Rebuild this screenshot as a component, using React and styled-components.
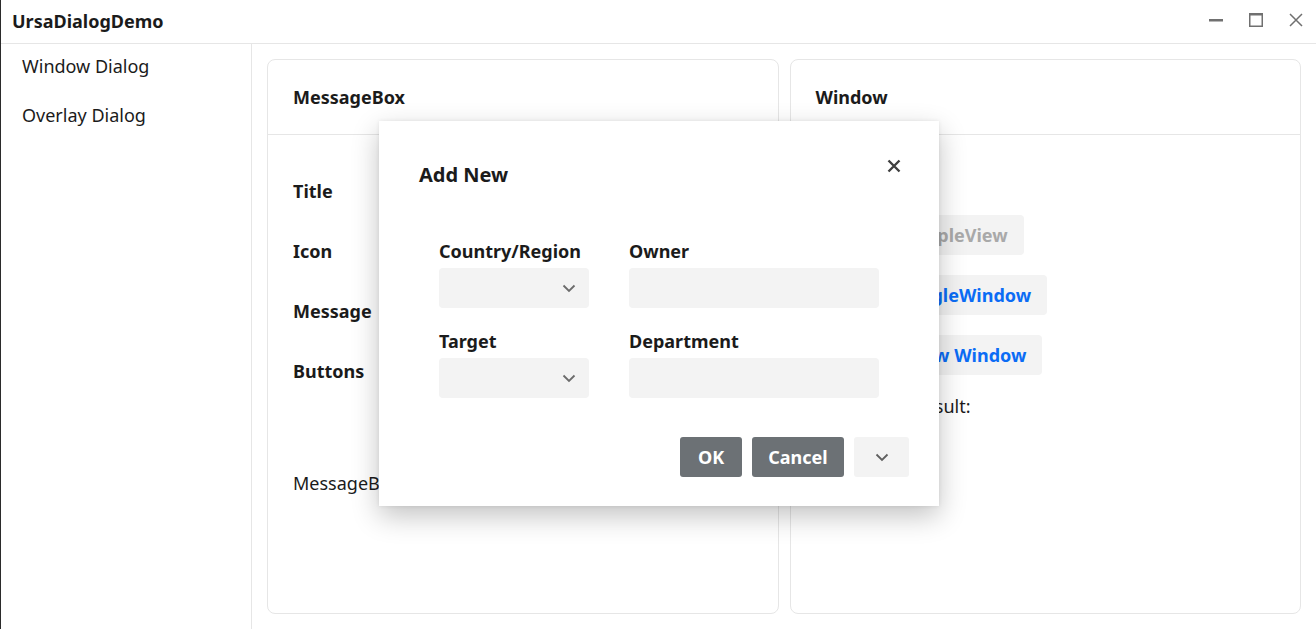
import React from "react";
import styled, { createGlobalStyle } from "styled-components";

const GlobalStyle = createGlobalStyle`
  html, body {
    margin: 0;
    padding: 0;
    height: 100%;
    background: #ffffff;
    font-family: "Noto Sans", "Open Sans", sans-serif;
    color: #1b1b1b;
  }
  #root {
    height: 100%;
  }
  * {
    box-sizing: border-box;
  }
`;

const WindowFrame = styled.div`
  position: relative;
  width: 100vw;
  height: 100vh;
  display: flex;
  flex-direction: column;
  border-left: 1px solid #2b2b2b;
  overflow: hidden;
`;

const TitleBar = styled.div`
  height: 44px;
  flex: none;
  display: flex;
  align-items: center;
  justify-content: space-between;
  padding-left: 11px;
  border-bottom: 1px solid #e6e6e6;
`;

const AppTitle = styled.div`
  font-size: 18px;
  font-weight: 700;
  line-height: 24px;
  margin-top: -2px;
`;

const Controls = styled.div`
  display: flex;
  align-items: center;
  height: 100%;
`;

const ControlButton = styled.div`
  width: 40px;
  height: 100%;
  display: flex;
  align-items: center;
  justify-content: center;
  margin-top: -4px;
  color: #707070;
`;

const Body = styled.div`
  flex: 1;
  display: flex;
  min-height: 0;
`;

const Sidebar = styled.nav`
  width: 251px;
  flex: none;
  border-right: 1px solid #e6e6e6;
  padding-top: 10px;
`;

const NavItem = styled.div`
  height: 49px;
  padding-left: 21px;
  font-size: 18px;
  line-height: 24px;
  color: #1b1b1b;
`;

const Main = styled.main`
  flex: 1;
  display: grid;
  grid-template-columns: 1fr 1fr;
  gap: 11px;
  padding: 15px;
`;

const Panel = styled.section`
  border: 1px solid #e6e6e6;
  border-radius: 8px;
  display: flex;
  flex-direction: column;
  min-width: 0;
`;

const PanelHeader = styled.div`
  height: 75px;
  flex: none;
  display: flex;
  align-items: center;
  padding-left: 25px;
  border-bottom: 1px solid #e6e6e6;
  font-size: 18px;
  font-weight: 700;
`;

const PanelBody = styled.div`
  padding: ${(p) => p.$top}px 25px 0 ${(p) => p.$left}px;
  display: flex;
  flex-direction: column;
  align-items: flex-start;
`;

const FieldLabel = styled.div`
  height: 60px;
  font-size: 18px;
  font-weight: 700;
  line-height: 24px;
`;

const PlainText = styled.div`
  font-size: 18px;
  line-height: 24px;
  margin-top: ${(p) => p.$gap || 0}px;
  white-space: nowrap;
`;

const ActionButton = styled.button`
  height: 40px;
  margin-bottom: 20px;
  padding: 0 16px;
  border: none;
  border-radius: 4px;
  background: #f3f3f3;
  font-family: inherit;
  font-size: 18px;
  font-weight: 700;
  white-space: nowrap;
  color: ${(p) => (p.disabled ? "#a9a9a9" : "#0b6cf5")};
`;

const Overlay = styled.div`
  position: absolute;
  inset: 0;
  display: flex;
  align-items: center;
  justify-content: center;
`;

const Dialog = styled.div`
  width: 560px;
  height: 385px;
  margin-left: 1px;
  margin-top: -2px;
  background: #ffffff;
  box-shadow: 0 10px 26px rgba(0, 0, 0, 0.24), 0 0 4px rgba(0, 0, 0, 0.08);
  display: flex;
  flex-direction: column;
`;

const DialogHeader = styled.div`
  display: flex;
  justify-content: space-between;
  align-items: flex-start;
  padding: 40px 33px 0 40px;
`;

const DialogTitle = styled.div`
  font-size: 20px;
  font-weight: 700;
  line-height: 28px;
`;

const CloseButton = styled.div`
  width: 24px;
  height: 24px;
  margin-top: -7px;
  display: flex;
  align-items: center;
  justify-content: center;
  color: #404040;
`;

const FormGrid = styled.div`
  display: grid;
  grid-template-columns: 150px 250px;
  column-gap: 40px;
  row-gap: 21px;
  padding: 50px 0 0 60px;
`;

const FormField = styled.div`
  display: flex;
  flex-direction: column;
  gap: 4px;
`;

const FormLabel = styled.div`
  font-size: 18px;
  font-weight: 700;
  line-height: 25px;
  white-space: nowrap;
`;

const InputBox = styled.div`
  height: 40px;
  background: #f3f3f3;
  border-radius: 4px;
  display: flex;
  align-items: center;
  justify-content: flex-end;
  padding-right: 13px;
  color: #6b6b6b;
`;

const DialogFooter = styled.div`
  margin-top: auto;
  display: flex;
  justify-content: flex-end;
  gap: 10px;
  padding: 0 30px 29px 0;
`;

const FooterButton = styled.button`
  height: 40px;
  width: ${(p) => p.$w}px;
  border: none;
  border-radius: 3px;
  font-family: inherit;
  font-size: 18px;
  font-weight: 700;
  background: ${(p) => (p.$primary ? "#6c7175" : "#f3f3f3")};
  color: ${(p) => (p.$primary ? "#ffffff" : "#5f5f5f")};
  display: flex;
  align-items: center;
  justify-content: center;
`;

const Chevron = () => (
  <svg width="14" height="9" viewBox="0 0 14 9" fill="none">
    <path d="M1.5 1.5 L7 7 L12.5 1.5" stroke="currentColor" strokeWidth="1.8" />
  </svg>
);

export default function App() {
  return (
    <>
      <GlobalStyle />
      <WindowFrame>
        <TitleBar>
          <AppTitle>UrsaDialogDemo</AppTitle>
          <Controls>
            <ControlButton>
              <svg width="14" height="14" viewBox="0 0 14 14">
                <rect x="0" y="6" width="14" height="2.5" fill="currentColor" />
              </svg>
            </ControlButton>
            <ControlButton>
              <svg width="14" height="14" viewBox="0 0 14 14" fill="none">
                <rect x="0.75" y="0.75" width="12.5" height="12.5" stroke="currentColor" strokeWidth="1.5" />
                <rect x="0" y="0" width="14" height="2.5" fill="currentColor" />
              </svg>
            </ControlButton>
            <ControlButton>
              <svg width="14" height="14" viewBox="0 0 14 14">
                <path d="M1 1 L13 13 M13 1 L1 13" stroke="currentColor" strokeWidth="1.5" />
              </svg>
            </ControlButton>
          </Controls>
        </TitleBar>
        <Body>
          <Sidebar>
            <NavItem>Window Dialog</NavItem>
            <NavItem>Overlay Dialog</NavItem>
          </Sidebar>
          <Main>
            <Panel>
              <PanelHeader>MessageBox</PanelHeader>
              <PanelBody $top={44} $left={25}>
                <FieldLabel>Title</FieldLabel>
                <FieldLabel>Icon</FieldLabel>
                <FieldLabel>Message</FieldLabel>
                <FieldLabel>Buttons</FieldLabel>
                <PlainText $gap={52}>MessageBox Result:</PlainText>
              </PanelBody>
            </Panel>
            <Panel>
              <PanelHeader>Window</PanelHeader>
              <PanelBody $top={80} $left={50}>
                <ActionButton disabled>ShowSimpleView</ActionButton>
                <ActionButton>ShowSingleWindow</ActionButton>
                <ActionButton>Show New Window</ActionButton>
                <PlainText $gap={-1}>Window Result:</PlainText>
              </PanelBody>
            </Panel>
          </Main>
        </Body>
        <Overlay>
          <Dialog>
            <DialogHeader>
              <DialogTitle>Add New</DialogTitle>
              <CloseButton>
                <svg width="14" height="14" viewBox="0 0 14 14">
                  <path d="M1.5 1.5 L12.5 12.5 M12.5 1.5 L1.5 12.5" stroke="currentColor" strokeWidth="2.4" />
                </svg>
              </CloseButton>
            </DialogHeader>
            <FormGrid>
              <FormField>
                <FormLabel>Country/Region</FormLabel>
                <InputBox>
                  <Chevron />
                </InputBox>
              </FormField>
              <FormField>
                <FormLabel>Owner</FormLabel>
                <InputBox />
              </FormField>
              <FormField>
                <FormLabel>Target</FormLabel>
                <InputBox>
                  <Chevron />
                </InputBox>
              </FormField>
              <FormField>
                <FormLabel>Department</FormLabel>
                <InputBox />
              </FormField>
            </FormGrid>
            <DialogFooter>
              <FooterButton $primary $w={62}>OK</FooterButton>
              <FooterButton $primary $w={92}>Cancel</FooterButton>
              <FooterButton $w={55}>
                <Chevron />
              </FooterButton>
            </DialogFooter>
          </Dialog>
        </Overlay>
      </WindowFrame>
    </>
  );
}
